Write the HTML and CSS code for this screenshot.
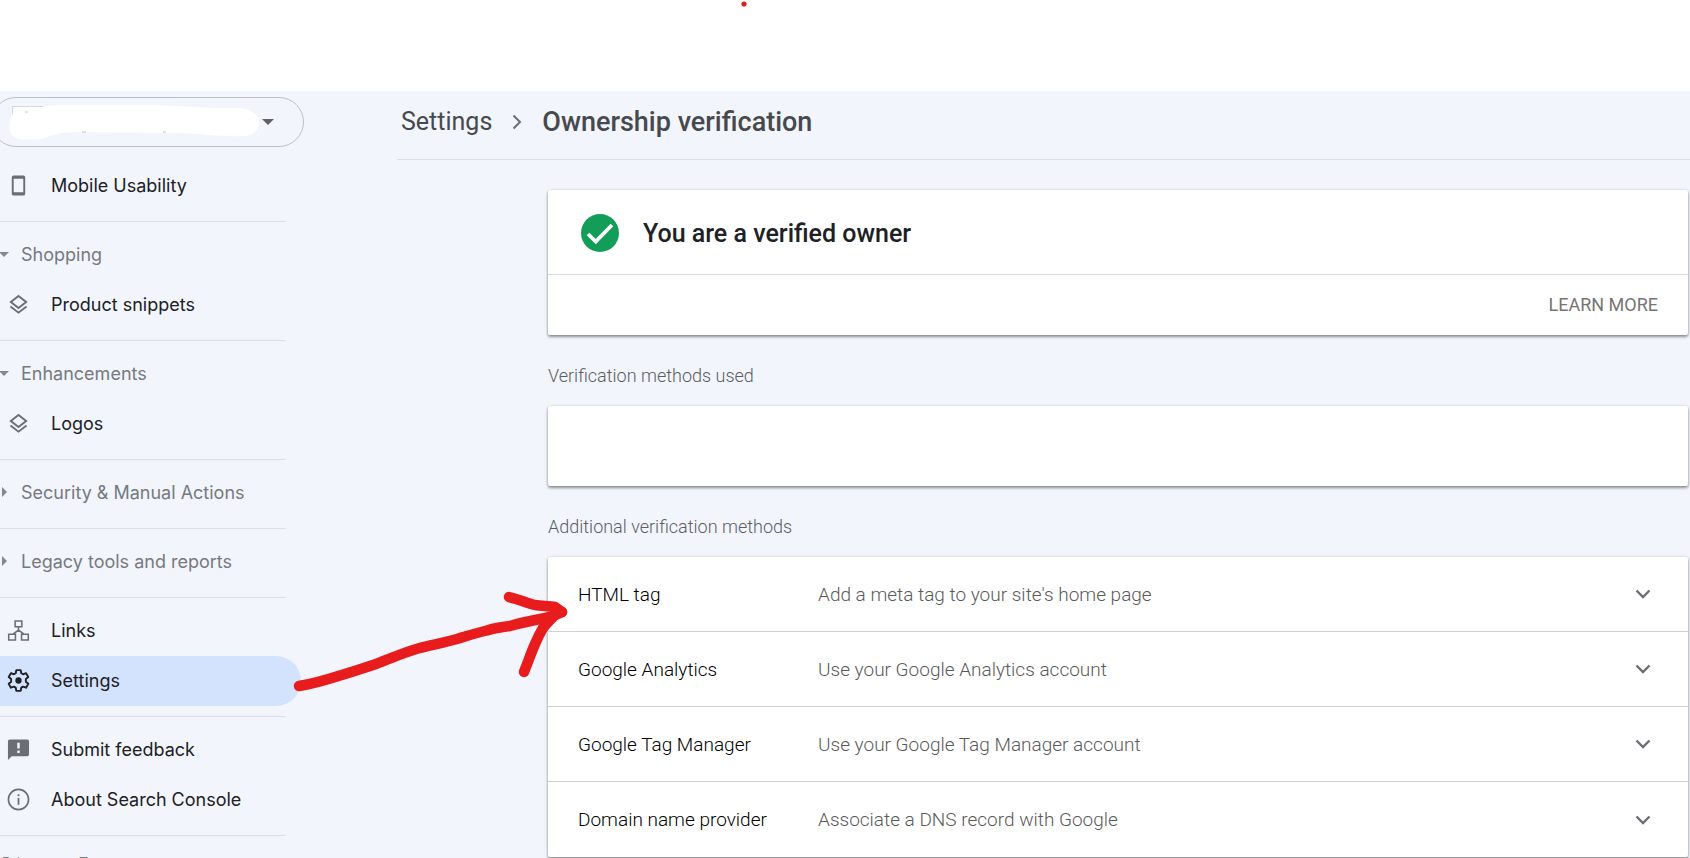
FILE: index.html
```html
<!DOCTYPE html>
<html lang="en">
<head>
<meta charset="utf-8">
<title>Ownership verification</title>
<link rel="stylesheet" href="styles.css">
</head>
<body>
<svg class="defs" width="0" height="0" aria-hidden="true">
  <symbol id="layers" viewBox="0 0 24 24"><path d="M12 3.2 20 9.4 12 15.6 4 9.4Z" fill="none" stroke="currentColor" stroke-width="2"/><path d="M3.6 14 12 20.5 20.4 14" fill="none" stroke="currentColor" stroke-width="2"/></symbol>
  <symbol id="down" viewBox="0 0 24 24"><path d="M5.5 8.5 12 15 18.500 8.500" fill="none" stroke="currentColor" stroke-width="2.400"/></symbol>
</svg>
<div class="topbar"></div>
<div class="shell">
  <aside class="sidebar">
    <button class="property" type="button" aria-label="Select property">
      <svg class="scribble" viewBox="0 0 270 48" aria-hidden="true">
        <rect x="20.500" y="8.500" width="30" height="14" fill="#fff" stroke="#d5d8e0"/>
        <path d="M22 14C30 12 40 11 50 9C60 7 70 7 84 7L150 7C180 7 200 9 220 10L247 10C258 11 267 15 267 25C267 33 260 38 250 38C230 39 215 36 190 35L85 34C70 34 60 37 52 40C44 42 30 42 24 40C15 36 16 22 22 14Z" fill="#fff"/>
        <path d="M33 14h3M90 34h4M171 34h3" stroke="#c3c5ca"/>
      </svg>
      <svg class="caret" viewBox="0 0 12 6" aria-hidden="true"><path d="M0 0h12L6 6Z" fill="currentColor"/></svg>
    </button>
    <nav>
      <div class="group">
        <a class="item" href="#"><svg class="icon" viewBox="0 0 24 24" aria-hidden="true"><path fill-rule="evenodd" fill="currentColor" d="M7 1.500h10a2 2 0 0 1 2 2v17a2 2 0 0 1-2 2H7a2 2 0 0 1-2-2v-17a2 2 0 0 1 2-2ZM7 5v14h10V5Z"/></svg>Mobile Usability</a>
      </div>
      <div class="group">
        <button class="head" type="button"><svg class="tri" viewBox="0 0 10 10" aria-hidden="true"><path d="M0 3h10L5 8Z" fill="currentColor"/></svg>Shopping</button>
        <a class="item" href="#"><svg class="icon" aria-hidden="true"><use href="#layers"/></svg>Product snippets</a>
      </div>
      <div class="group">
        <button class="head" type="button"><svg class="tri" viewBox="0 0 10 10" aria-hidden="true"><path d="M0 3h10L5 8Z" fill="currentColor"/></svg>Enhancements</button>
        <a class="item" href="#"><svg class="icon" aria-hidden="true"><use href="#layers"/></svg>Logos</a>
      </div>
      <div class="group">
        <button class="head" type="button"><svg class="tri" viewBox="0 0 10 10" aria-hidden="true"><path d="M3 0v10L8 5Z" fill="currentColor"/></svg>Security &amp; Manual Actions</button>
      </div>
      <div class="group">
        <button class="head" type="button"><svg class="tri" viewBox="0 0 10 10" aria-hidden="true"><path d="M3 0v10L8 5Z" fill="currentColor"/></svg>Legacy tools and reports</button>
      </div>
      <div class="group">
        <a class="item" href="#"><svg class="icon" viewBox="0 0 24 24" aria-hidden="true"><g fill="none" stroke="currentColor" stroke-width="1.600"><path d="M8.500 2h7v6h-7ZM1.800 16h7v6h-7ZM15.200 16h7v6h-7ZM12 8v4M6 16l6-4.500 6 4.500"/></g></svg>Links</a>
        <a class="item current" href="#" aria-current="page"><svg class="icon" viewBox="0 0 24 24" aria-hidden="true"><path d="M9.700 1.200h4.600l.6 3.200 1.900 1.100 3.100-1.100 2.300 4-2.500 2.100v2.900l2.500 2.100-2.300 4-3.100-1.100-1.900 1.100-.6 3.300H9.700l-.6-3.300-1.900-1.100-3.100 1.100-2.300-4 2.500-2.100v-2.900L1.800 8.400l2.300-4 3.100 1.100 1.900-1.100Z" fill="none" stroke="currentColor" stroke-width="2" stroke-linejoin="round"/><circle cx="12" cy="12" r="3.300" fill="currentColor"/></svg>Settings</a>
      </div>
      <div class="group">
        <a class="item" href="#"><svg class="icon" viewBox="0 0 24 24" aria-hidden="true"><path fill-rule="evenodd" fill="currentColor" d="M3 1.500h18a2 2 0 0 1 2 2v13.500a2 2 0 0 1-2 2H5l-4 4v-19.500a2 2 0 0 1 2-2ZM10.700 5v6h2.600V5ZM10.700 13v2.600h2.600V13Z"/></svg>Submit feedback</a>
        <a class="item" href="#"><svg class="icon" viewBox="0 0 24 24" aria-hidden="true"><circle cx="12" cy="12" r="10.500" fill="none" stroke="currentColor" stroke-width="1.700"/><path d="M12 10.500v7M12 6.500v2" stroke="currentColor" stroke-width="1.800"/></svg>About Search Console</a>
      </div>
    </nav>
    <footer class="legal"><a href="#">Privacy</a><a href="#">Terms</a></footer>
  </aside>
  <main class="main">
    <header class="crumbs">
      <a href="#">Settings</a>
      <svg class="sep" viewBox="0 0 10 16" aria-hidden="true"><path d="M1.500 1.500 8 8 1.500 14.500" fill="none" stroke="currentColor" stroke-width="2"/></svg>
      <h1>Ownership verification</h1>
    </header>
    <div class="content">
      <section class="card">
        <div class="status">
          <svg class="check" viewBox="0 0 38 38" aria-hidden="true"><circle cx="19" cy="19" r="19" fill="#129d58"/><path d="M7 20 14.800 27.500 31 11" fill="none" stroke="#fff" stroke-width="3.800"/></svg>
          <h2>You are a verified owner</h2>
        </div>
        <div class="actions"><a href="#">LEARN MORE</a></div>
      </section>
      <h3>Verification methods used</h3>
      <section class="card used"></section>
      <h3>Additional verification methods</h3>
      <section class="card">
        <button class="method" type="button"><span>HTML tag</span><span class="desc">Add a meta tag to your site's home page</span><svg class="icon" aria-hidden="true"><use href="#down"/></svg></button>
        <button class="method" type="button"><span>Google Analytics</span><span class="desc">Use your Google Analytics account</span><svg class="icon" aria-hidden="true"><use href="#down"/></svg></button>
        <button class="method" type="button"><span>Google Tag Manager</span><span class="desc">Use your Google Tag Manager account</span><svg class="icon" aria-hidden="true"><use href="#down"/></svg></button>
        <button class="method" type="button"><span>Domain name provider</span><span class="desc">Associate a DNS record with Google</span><svg class="icon" aria-hidden="true"><use href="#down"/></svg></button>
      </section>
    </div>
  </main>
</div>
<svg class="marker" width="900" height="858" viewBox="0 0 900 858" aria-hidden="true">
  <circle cx="744" cy="4" r="2.600" fill="#d8201f"/>
  <g fill="none" stroke="#e81c1c" stroke-width="10.500" stroke-linecap="round" stroke-linejoin="round">
    <path d="M299 686C312 684 326 680 340 675.500C352 672 364 668 376 664C390 659 402 653 418 648.500C430 645 443 643 457 639C467 636 476 633 487 630.500C495 628 502 627 510 626C520 623 530 621 540 619C548 618 556 615 562 612"/>
    <path d="M509 597C518 599 527 603 535 605C543 606 550 606 555 607L562 612"/>
    <path d="M524 672C528 662 531 653 535 644C538 637 540 633 543 628C546 624 550 620 553 617"/>
  </g>
</svg>
</body>
</html>
```
FILE: styles.css
```css
* { box-sizing: border-box; }
body {
  margin: 0;
  height: 100vh;
  overflow: hidden;
  position: relative;
  display: flex;
  flex-direction: column;
  background: #fff;
  color: #202124;
  font-family: Roboto, "Liberation Sans", sans-serif;
  font-size: 18px;
}
a { color: inherit; text-decoration: none; }
button { border: 0; background: none; font: inherit; color: inherit; text-align: left; padding: 0; cursor: pointer; }
h1, h2, h3 { margin: 0; font-weight: 400; }
svg { flex: none; }
.defs { position: absolute; }
.icon { width: 24px; height: 24px; color: #6b6e73; }
.topbar { flex: none; height: 91px; }
.shell { flex: 1; min-height: 0; display: flex; background: #f2f5fc; }

.sidebar { width: 397px; flex: none; padding-top: 6px; font-family: Inter, sans-serif; font-size: 18px; }
.property {
  display: flex;
  align-items: center;
  width: 313px;
  height: 50px;
  margin-left: -9px;
  margin-bottom: 14px;
  border: 1px solid #bdc0c7;
  border-radius: 25px;
}
.scribble { width: 270px; height: 48px; }
.caret { width: 12px; height: 6px; color: #5f6368; }
.group { width: 286px; padding: 8px 0 10px; border-bottom: 1px solid #dcdfe6; }
.group:first-child { padding-top: 0; }
.item, .head { display: flex; align-items: center; width: 100%; height: 50px; padding-bottom: 2px; }
.item { padding-left: 7px; gap: 21px; }
.item .icon { width: 23px; height: 23px; }
.head { color: #767a80; gap: 12px; margin-left: -1px; }
.tri { width: 10px; height: 10px; color: #85888d; }
.item.current { width: 301px; background: #d3e2fd; border-radius: 0 25px 25px 0; }
.current .icon { color: #202124; }
.legal { display: flex; gap: 28px; padding: 18px 0 0 2px; font-size: 14px; color: #767a80; }

.main { flex: 1; min-width: 0; }
.crumbs {
  display: flex;
  align-items: center;
  height: 69px;
  padding: 0 4px 7px;
  border-bottom: 1px solid #dcdfe6;
  color: #46494d;
  font-size: 25px;
}
.crumbs h1 { font-size: 27px; font-weight: 500; }
.sep { width: 10px; height: 16px; margin: 0 20px; color: #6b6e73; }
.content { padding: 30px 2px 0 151px; }
.card { background: #fff; border-radius: 2px; box-shadow: 0 2px 3px rgba(0, 0, 0, .4), 0 0 3px rgba(0, 0, 0, .15); }
.status { display: flex; align-items: center; gap: 24px; height: 85px; padding: 2px 0 0 33px; border-bottom: 1px solid #dadce0; color: #202124; }
.status h2 { font-size: 25px; font-weight: 500; }
.check { width: 38px; height: 38px; }
.actions { display: flex; align-items: center; justify-content: flex-end; height: 60px; padding: 0 30px 2px 0; color: #757575; }
.content h3 { height: 71px; padding-top: 10px; line-height: 61px; font-size: 18px; font-weight: 300; color: #5a5e63; }
.used { height: 80px; }
.method {
  display: grid;
  grid-template-columns: 240px 1fr 24px;
  align-items: center;
  width: 100%;
  height: 75px;
  padding: 0 33px 0 30px;
  border-bottom: 1px solid #cfd0d3;
  font-size: 19px;
  font-weight: 300;
  color: #000;
}
.method:last-child { border-bottom: 0; }
.desc { color: #5a5a5a; }
.marker { position: absolute; left: 0; top: 0; pointer-events: none; }
```
